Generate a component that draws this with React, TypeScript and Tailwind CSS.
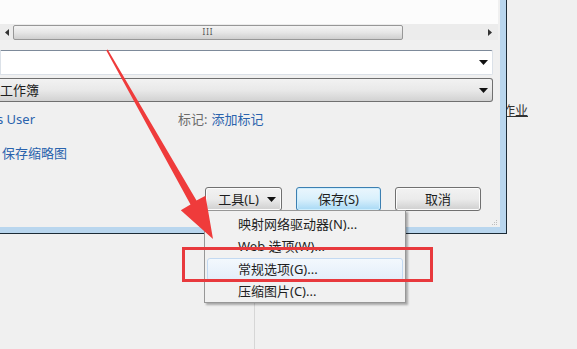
import React from 'react';

const font = "font-['Noto_Sans','Noto_Sans_CJK_SC',sans-serif]";

function DropArrow({ className = '' }: { className?: string }) {
  return (
    <svg width="9" height="5" viewBox="0 0 9 5" className={className}>
      <path d="M0 0h9L4.5 5z" fill="#111" />
    </svg>
  );
}

function WinButton({ children, width, primary }: { children: React.ReactNode; width: string; primary?: boolean }) {
  return (
    <div
      className={`${width} h-[24px] rounded-[3px] border flex items-center justify-center text-[13px] leading-none text-[#1e1e1e] ${
        primary
          ? 'border-[#3c7fb1] bg-gradient-to-b from-[#eaf6fd] via-[#d9f0fc] to-[#a7d9f5] shadow-[inset_0_0_0_1px_#cdeefe]'
          : 'border-[#707070] bg-gradient-to-b from-[#f2f2f2] via-[#ebebeb] to-[#cfcfcf] shadow-[inset_0_0_0_1px_#fcfcfc]'
      }`}
    >
      {children}
    </div>
  );
}

const menuItems = ['映射网络驱动器(N)...', 'Web 选项(W)...', '常规选项(G)...', '压缩图片(C)...'];

export default function App() {
  return (
    <div className={`relative w-[577px] h-[349px] overflow-hidden bg-[#f0f0f0] ${font}`}>
      <div className="flex h-[234px]">
        {/* dialog */}
        <div className="w-[507px] h-[234px] border-r border-b border-[#1c2b36]">
          <div className="h-full border-r-[6px] border-b-[6px] border-[#b9d6ee]">
            <div className="relative h-full bg-[#f0f0f0]">
              <div className="h-[24px] w-[498px] bg-[#fcfcfc]" />
              {/* horizontal scrollbar */}
              <div className="h-[16px] w-[498px] bg-[#ececec] flex items-center">
                <div className="w-[13px] flex justify-center">
                  <svg width="4" height="7" viewBox="0 0 4 7">
                    <path d="M4 0v7L0 3.5z" fill="#333" />
                  </svg>
                </div>
                <div className="w-[390px] h-[15px] rounded-[2px] border border-[#979797] bg-gradient-to-b from-[#f4f4f4] via-[#e6e6e6] to-[#cfcfcf] flex items-center justify-center">
                  <span className="text-[8px] leading-none text-[#555] tracking-[1px]">III</span>
                </div>
                <div className="flex-1" />
                <div className="w-[13px] flex justify-center pr-[4px]">
                  <svg width="4" height="7" viewBox="0 0 4 7">
                    <path d="M0 0v7L4 3.5z" fill="#333" />
                  </svg>
                </div>
              </div>
              {/* text box */}
              <div className="mt-[10px] w-[493px] h-[25px] bg-white border border-[#dbe1e8] border-t-[#7d8a9a] rounded-r-[2px] flex items-center justify-end pr-[4px]">
                <DropArrow />
              </div>
              {/* combo */}
              <div className="mt-[3px] w-[493px] h-[24px] rounded-r-[3px] border border-[#707070] border-l-0 bg-gradient-to-b from-[#f2f2f2] via-[#e9e9e9] to-[#d2d2d2] flex items-center justify-between pr-[4px]">
                <span className="text-[13px] leading-none text-[#1e1e1e]">工作簿</span>
                <DropArrow />
              </div>
              {/* meta row */}
              <div className="mt-[9px] h-[16px] flex items-center text-[13px] leading-none">
                <span className="text-[#2a63ad] ml-[-3px] w-[181px]">s User</span>
                <span className="text-[#6b6b6b]">标记:</span>
                <span className="text-[#2a63ad] ml-[4px]">添加标记</span>
              </div>
              <div className="mt-[18px] h-[16px] flex items-center text-[13px] leading-none">
                <span className="text-[#2a63ad] ml-[2px]">保存缩略图</span>
              </div>
              {/* buttons */}
              <div className="mt-[26px] flex pl-[205px]">
                <WinButton width="w-[77px]">
                  <span className="flex-1 text-center pl-[4px]">工具(L)</span>
                  <DropArrow className="mr-[5px]" />
                </WinButton>
                <div className="w-[14px]" />
                <WinButton width="w-[85px]" primary>
                  保存(S)
                </WinButton>
                <div className="w-[14px]" />
                <WinButton width="w-[86px]">取消</WinButton>
              </div>
              {/* resize grip */}
              <div className="absolute right-[3px] bottom-[2px] grid grid-cols-3 gap-[1px]">
                {[0, 0, 1, 0, 1, 1, 1, 1, 1].map((v, i) => (
                  <div key={i} className={`w-[1px] h-[1px] ${v ? 'bg-[#bdbdbd]' : ''}`} />
                ))}
              </div>
            </div>
          </div>
        </div>
        {/* window behind */}
        <div className="flex-1 overflow-hidden">
          <div className="mt-[104px] ml-[-5px] text-[13px] leading-none text-[#333] underline whitespace-nowrap">作业</div>
        </div>
      </div>
      {/* area below dialog */}
      <div className="flex h-[115px]">
        <div className="w-[255px] h-full border-r border-[#d6d6d6]" />
      </div>

      {/* tools menu */}
      <div className="absolute left-[204px] top-[210px] w-[202px] h-[93px] bg-[#f1f1f1] border border-[#979797] shadow-[2px_2px_2px_rgba(0,0,0,0.3)] py-[1px] pl-[2px] pr-[2px]">
        <div className="flex flex-col pt-[1px]">
          {menuItems.map((t, i) => (
            <div
              key={t}
              className={`h-[22.5px] flex items-center pl-[30px] text-[13px] leading-none text-[#1e1e1e] rounded-[3px] border ${
                i === 2
                  ? 'border-[#c3d9f1] bg-gradient-to-b from-[#f3f8fd] to-[#e3eefa]'
                  : 'border-transparent'
              }`}
            >
              {t}
            </div>
          ))}
        </div>
      </div>

      {/* highlight box */}
      <div className="absolute left-[182px] top-[247px] w-[251px] h-[35px] border-[3px] border-[#e8393d]" />

      {/* arrow */}
      <svg className="absolute left-0 top-0 pointer-events-none" width="577" height="349" viewBox="0 0 577 349">
        <polygon
          points="106.3,50.4 107.7,49.6 196.5,200.5 205.5,195.8 213,239 180.8,210.2 190.5,204.5"
          fill="#ef3b3b"
        />
      </svg>
    </div>
  );
}
